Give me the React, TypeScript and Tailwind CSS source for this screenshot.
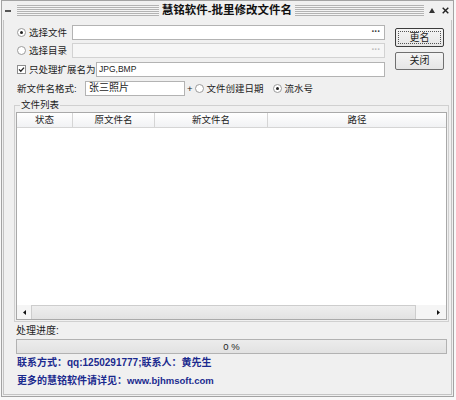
import type { ReactNode } from "react";

const cjk = "font-['Liberation_Sans','Noto_Sans_CJK_SC',sans-serif]";

function Radio({ checked }: { checked?: boolean }) {
  return (
    <span className="flex h-[9px] w-[9px] shrink-0 items-center justify-center rounded-full border border-[#9a9a9a] bg-white">
      {checked ? <span className="h-[3px] w-[3px] rounded-full bg-[#222]" /> : null}
    </span>
  );
}

function Checkbox() {
  return (
    <span className="flex h-[9px] w-[9px] shrink-0 items-center justify-center border border-[#8e8e8e] bg-white">
      <svg width="7" height="7" viewBox="0 0 7 7">
        <path d="M1 3.4 L2.8 5.2 L6 1.6" fill="none" stroke="#222" strokeWidth="1.3" />
      </svg>
    </span>
  );
}

function Field({ children, disabled, dots, className }: { children?: ReactNode; disabled?: boolean; dots?: boolean; className: string }) {
  return (
    <div
      className={`flex h-[15px] items-center border px-[2px] ${
        disabled ? "border-[#d2d2d2] bg-[#f6f6f6]" : "border-[#b3b3b3] bg-white"
      } ${className}`}
    >
      <div className="flex-1 truncate">{children}</div>
      {dots ? (
        <span className={`mb-[2px] mr-[2px] text-[10px] font-bold leading-none tracking-[-0.5px] ${disabled ? "text-[#bcbcbc]" : "text-[#3a3a3a]"}`}>
          ···
        </span>
      ) : null}
    </div>
  );
}

function Stripes({ className }: { className: string }) {
  return (
    <div
      className={`h-[11px] bg-[repeating-linear-gradient(to_bottom,#b3b3b3_0px,#b3b3b3_1px,#f4f4f4_1px,#f4f4f4_2px)] ${className}`}
    />
  );
}

function Arrow({ dir }: { dir: "left" | "right" }) {
  return (
    <svg width="3" height="5" viewBox="0 0 3 5">
      <path d={dir === "left" ? "M3 0 L0 2.5 L3 5Z" : "M0 0 L3 2.5 L0 5Z"} fill="#111" />
    </svg>
  );
}

export default function App() {
  return (
    <div className={`h-[400px] w-[456px] whitespace-nowrap bg-[#f8f8f8] pl-[1px] text-[9.5px] text-[#1d1d1d] ${cjk}`}>
      <div className="flex h-[397px] w-[453px] flex-col border border-[#a3a3a3] bg-[#f0f0f0]">
        {/* title bar */}
        <div className="flex h-[19px] shrink-0 items-center">
          <span className="ml-[3px] h-[2px] w-[6px] bg-[#555]" />
          <Stripes className="ml-[6px] mr-[3px] flex-1" />
          <span className="text-[11.5px] font-bold leading-none text-[#111]">慧铭软件-批里修改文件名</span>
          <Stripes className="ml-[3px] mr-[5px] w-[129px]" />
          <svg className="mr-[7px]" width="6" height="5" viewBox="0 0 6 5">
            <path d="M0 5 L3 0 L6 5Z" fill="#333" />
          </svg>
          <svg className="mr-[4px]" width="7" height="7" viewBox="0 0 7 7">
            <path d="M0.7 0.7 L6.3 6.3 M6.3 0.7 L0.7 6.3" stroke="#222" strokeWidth="1.4" />
          </svg>
        </div>

        <div className="mx-[1px] mb-[1px] flex flex-1 flex-col border-x border-b border-[#c4c4c4] pl-[10px] pr-[2px]">
          {/* top controls */}
          <div className="flex pt-[5px]">
            <div className="flex w-[371px] flex-col">
              <div className="flex h-[15px] items-center">
                <div className="flex w-[58px] items-center gap-[3px] pl-[3px]">
                  <Radio checked />
                  <span className="leading-none">选择文件</span>
                </div>
                <Field className="flex-1" dots />
              </div>
              <div className="mt-[3px] flex h-[15px] items-center">
                <div className="flex w-[58px] items-center gap-[3px] pl-[3px]">
                  <Radio />
                  <span className="leading-none">选择目录</span>
                </div>
                <Field className="flex-1" dots disabled />
              </div>
              <div className="mt-[4px] flex h-[15px] items-center">
                <div className="flex w-[82px] items-center gap-[3px] pl-[3px]">
                  <Checkbox />
                  <span className="leading-none">只处理扩展名为</span>
                </div>
                <Field className="flex-1">
                  <span className="text-[8.5px] leading-none">JPG,BMP</span>
                </Field>
              </div>
              <div className="mt-[4px] flex h-[15px] items-center">
                <div className="w-[71px] pl-[3px] leading-none">新文件名格式:</div>
                <Field className="w-[100px]">
                  <span className="pl-[1px] text-[10px] leading-none">张三照片</span>
                </Field>
                <span className="ml-[2px] mr-[2px] leading-none">+</span>
                <Radio />
                <span className="ml-[3px] leading-none">文件创建日期</span>
                <span className="ml-[9px]">
                  <Radio checked />
                </span>
                <span className="ml-[3px] leading-none">流水号</span>
              </div>
            </div>
            <div className="ml-[10px] mt-[3px] flex w-[49px] flex-col gap-[5px]">
              <button
                type="button"
                className="flex h-[19px] items-center justify-center rounded-[2px] border border-[#3c3c3c] bg-[linear-gradient(#f4f4f4,#e6e6e6)] p-[2px] text-[10px] leading-none"
              >
                <span className="flex h-full w-full items-center justify-center border border-dotted border-[#555]">更名</span>
              </button>
              <button
                type="button"
                className="flex h-[18px] items-center justify-center rounded-[2px] border border-[#707070] bg-[linear-gradient(#f4f4f4,#e6e6e6)] text-[10px] leading-none"
              >
                关闭
              </button>
            </div>
          </div>

          {/* file list group */}
          <div className="relative mt-[9px] border border-[#d0d0d0] px-[1px] pb-[1px] pt-[6px]">
            <span className="absolute -top-[7px] left-[5px] bg-[#f0f0f0] px-[1px] leading-[12px]">文件列表</span>
            <div className="flex flex-col border border-[#a9a9a9] bg-white">
              <div className="flex h-[15px] border-b border-[#d5d5d5] bg-[linear-gradient(#ffffff,#f1f2f4)] leading-[14px]">
                <div className="w-[56px] border-r border-[#d5d5d5] text-center">状态</div>
                <div className="w-[82px] border-r border-[#d5d5d5] text-center">原文件名</div>
                <div className="w-[113px] border-r border-[#d5d5d5] text-center">新文件名</div>
                <div className="flex-1 text-center">路径</div>
              </div>
              <div className="h-[177px]" />
              <div className="flex h-[14px] bg-[#f5f5f5]">
                <div className="flex w-[14px] items-center justify-center">
                  <Arrow dir="left" />
                </div>
                <div className="flex-1 border-x border-t border-[#cdcdcd] bg-[linear-gradient(#eeeeee,#e2e2e2)]" />
                <div className="w-[15px]" />
                <div className="flex w-[15px] items-center justify-center">
                  <Arrow dir="right" />
                </div>
              </div>
            </div>
          </div>

          {/* progress */}
          <div className="mt-[3px] pl-[2px] text-[10px] leading-[12px]">处理进度:</div>
          <div className="mt-[2px] ml-[2px] mr-[2px] flex h-[15px] items-center justify-center border border-[#b2b2b2] bg-[linear-gradient(#ececec,#e2e2e2)] leading-none">
            0 %
          </div>

          <div className="mt-[3px] pl-[3px] text-[10px] font-bold leading-[12px] text-[#1b2a8e]">
            联系方式：qq:1250291777;联系人：黄先生
          </div>
          <div className="mt-[6px] pl-[3px] text-[10px] font-bold leading-[12px] text-[#1b2a8e]">
            更多的慧铭软件请详见：<span className="text-[9.5px]">www.bjhmsoft.com</span>
          </div>
        </div>
      </div>
    </div>
  );
}
